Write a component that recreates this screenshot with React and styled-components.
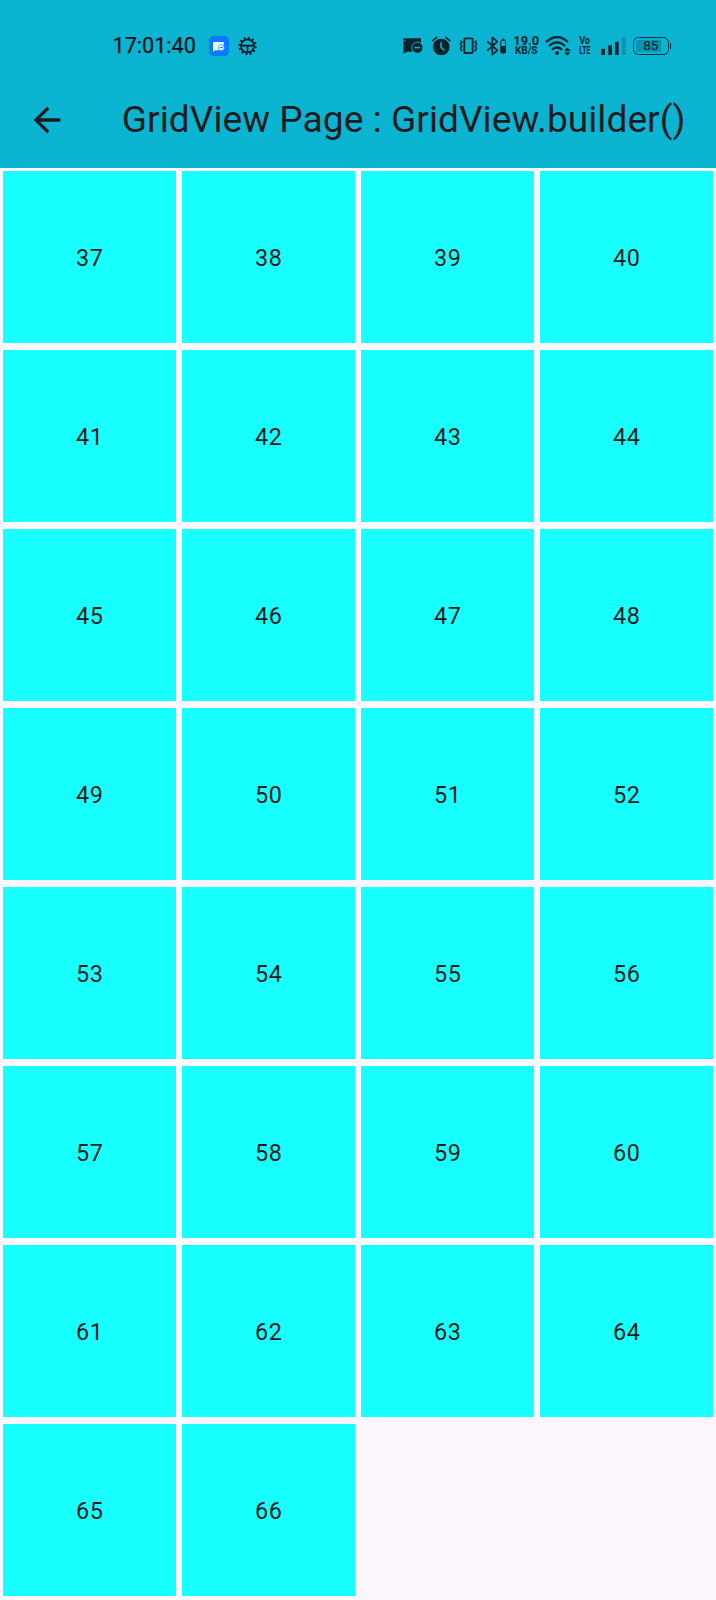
import React from "react";
import styled, { createGlobalStyle } from "styled-components";

const GlobalStyle = createGlobalStyle`
  * { box-sizing: border-box; }
  body { margin: 0; background: #fef7ff; }
`;

const Screen = styled.div`
  width: 716px;
  height: 1600px;
  overflow: hidden;
  background: #fef7ff;
  color: #1d1b20;
  font-family: Roboto, sans-serif;
`;

const Header = styled.header`
  height: 167.6px;
  background: #0bb4d1;
`;

const StatusBar = styled.div`
  display: flex;
  align-items: center;
  justify-content: space-between;
  height: 74px;
  padding: 17px 45px 0 112.5px;
  color: #06222b;
`;

const StatusGroup = styled.div`
  display: flex;
  align-items: center;
`;

const Clock = styled.span`
  width: 96px;
  padding-top: 1px;
  font-size: 21.6px;
  line-height: 24px;
  font-weight: 400;
  -webkit-text-stroke: 0.25px #041217;
  color: #041217;
  white-space: nowrap;
`;

const Glyph = styled.svg`
  display: block;
  flex: none;
  width: ${(p) => p.$w}px;
  height: ${(p) => p.$h || 20}px;
  margin-right: ${(p) => p.$gap || 0}px;
`;

const Stack = styled.div`
  display: flex;
  flex-direction: column;
  align-items: center;
  flex: none;
  width: ${(p) => p.$w}px;
  margin-right: ${(p) => p.$gap}px;
  white-space: nowrap;
`;

const StackLine = styled.span`
  font-size: ${(p) => p.$size}px;
  line-height: ${(p) => p.$line}px;
  font-weight: ${(p) => p.$weight || 700};
  transform: scaleX(${(p) => p.$stretch || 1});
`;

const Battery = styled.div`
  display: flex;
  align-items: center;
  width: 38px;
`;

const BatteryCase = styled.div`
  width: 35.5px;
  height: 18px;
  padding: 2px;
  border: 1.5px solid #08303b;
  border-radius: 5.5px;
`;

const BatteryLevel = styled.div`
  display: flex;
  align-items: center;
  justify-content: center;
  height: 100%;
  border-radius: 3px;
  font-size: 13.5px;
  line-height: 11px;
  font-weight: 400;
  background: linear-gradient(90deg, #0893af 84%, transparent 84%);
`;

const BatteryTip = styled.div`
  width: 1.5px;
  height: 6px;
  margin-left: 1px;
  border-radius: 1px;
  background: #08303b;
`;

const AppBar = styled.div`
  display: flex;
  align-items: center;
  height: 92px;
  padding-left: 27.3px;
`;

const BackButton = styled.button`
  display: flex;
  width: 40px;
  height: 40px;
  margin: 0 54.5px 0 0;
  padding: 0;
  border: 0;
  background: none;
  color: inherit;
`;

const Title = styled.h1`
  margin: 0;
  font-size: 37px;
  line-height: 46px;
  font-weight: 400;
  letter-spacing: 0.09px;
  white-space: nowrap;
`;

const Grid = styled.main`
  display: grid;
  grid-template-columns: repeat(4, 1fr);
  grid-auto-rows: 179px;
`;

const Cell = styled.div`
  display: flex;
  align-items: center;
  justify-content: center;
  margin: 3.3px;
  padding: 2.4px 0 0 0.4px;
  background: #18ffff;
  font-size: 23.4px;
  line-height: 33px;
  letter-spacing: 0.5px;
`;

const DARK = "#06222b";
const TEAL = "#0bb4d1";

const BadgeIcon = () => (
  <Glyph $w={20} $gap={9.5} viewBox="0 0 60 60">
    <rect width="60" height="60" rx="13" fill="#087bff" />
    <path d="M12 18h32v10a12 12 0 0 0-14 15H18l-6 5z" fill="#fff" />
    <circle cx="37" cy="35" r="9" fill="#fff" stroke="#087bff" strokeWidth="2" />
    <path d="M32 35h10" stroke="#087bff" strokeWidth="3" />
  </Glyph>
);

const GearIcon = () => (
  <Glyph $w={19} viewBox="-29 -29 58 58">
    <g fill="none" stroke="#041217">
      <circle r="20" strokeWidth="5" />
      <circle r="25" strokeWidth="5.5" strokeDasharray="6.5 6.590" />
      <path d="M-19-1H19M0 0V19" strokeWidth="5" />
    </g>
  </Glyph>
);

const MessageIcon = () => (
  <Glyph $w={20} $gap={8} viewBox="23 32 60 60">
    <path d="M24 39h53v14q-18-5-26 12v14H36l-12 6z" fill={DARK} />
    <path d="M25 44l7 4" stroke={TEAL} strokeWidth="2" />
    <circle cx="66" cy="67" r="17" fill={DARK} stroke={TEAL} strokeWidth="3" />
    <path d="M57 67h18" stroke={TEAL} strokeWidth="4.5" />
  </Glyph>
);

const AlarmIcon = () => (
  <Glyph $w={20} $gap={8.5} viewBox="108 31 60 60">
    <circle cx="138.500" cy="64" r="25" fill={DARK} />
    <path d="M113 45l12-10M164 45l-12-10" stroke={DARK} strokeWidth="5" strokeLinecap="round" />
    <path d="M138 51v14l9 8" fill="none" stroke={TEAL} strokeWidth="4.500" strokeLinecap="round" />
  </Glyph>
);

const VibrateIcon = () => (
  <Glyph $w={19} $gap={8} viewBox="192 31 57 60">
    <g fill="none" stroke={DARK} strokeWidth="5.500" strokeLinejoin="round">
      <rect x="208" y="38" width="25" height="44" rx="3" />
      <path d="M196 45l5 5-5 6 5 6-5 6 5 6-3 3M245 45l-5 5 5 6-5 6 5 6-5 6 3 3" strokeWidth="4.500" />
    </g>
  </Glyph>
);

const BluetoothIcon = () => (
  <Glyph $w={21} $gap={6.5} viewBox="272 30 63 60">
    <path d="M276 46l30 27-15 13V34l15 13-30 27" fill="none" stroke={DARK} strokeWidth="5" strokeLinejoin="round" />
    <rect x="316.500" y="43" width="14" height="38" rx="3" fill="none" stroke={DARK} strokeWidth="3" />
    <path d="M320 38h7v4h-7zM316 60h15v21h-15z" fill={DARK} />
  </Glyph>
);

const WifiIcon = () => (
  <Glyph $w={26} $gap={7.5} viewBox="28 28 78 60">
    <g fill="none" stroke={DARK} strokeWidth="6.500">
      <path d="M31 46Q64 16 97 46" />
      <path d="M40 58Q64 36 88 58" />
      <path d="M49 69Q64 56 79 69" />
    </g>
    <circle cx="64" cy="79" r="6" fill={DARK} />
    <path d="M95 62l9 11H86zM86 77h18l-9 10z" fill={DARK} />
  </Glyph>
);

const SignalIcon = () => (
  <Glyph $w={25} $gap={7.3} viewBox="196 28 75 60">
    <path d="M197 66h11v19h-11zM218 56h11v29h-11zM238 45h11v40h-11z" fill={DARK} />
    <path d="M259 32h11v53h-11z" fill="#0893af" />
  </Glyph>
);

const firstItem = 37;
const items = Array.from({ length: 30 }, (_, i) => firstItem + i);

export default function App() {
  return (
    <Screen>
      <GlobalStyle />
      <Header>
        <StatusBar>
          <StatusGroup>
            <Clock>17:01:40</Clock>
            <BadgeIcon />
            <GearIcon />
          </StatusGroup>
          <StatusGroup>
            <MessageIcon />
            <AlarmIcon />
            <VibrateIcon />
            <BluetoothIcon />
            <Stack $w={25} $gap={6}>
              <StackLine $size={12.8} $line={11.5}>19.0</StackLine>
              <StackLine $size={10} $line={10.5}>KB/S</StackLine>
            </Stack>
            <WifiIcon />
            <Stack $w={13} $gap={9.5}>
              <StackLine $size={11} $line={10} $stretch={0.82}>Vo</StackLine>
              <StackLine $size={11} $line={10} $stretch={0.63}>LTE</StackLine>
            </Stack>
            <SignalIcon />
            <Battery>
              <BatteryCase>
                <BatteryLevel>85</BatteryLevel>
              </BatteryCase>
              <BatteryTip />
            </Battery>
          </StatusGroup>
        </StatusBar>
        <AppBar>
          <BackButton aria-label="Back">
            <Glyph $w={40} $h={40} viewBox="0 0 24 24">
              <path d="M20 11H7.830l5.590-5.590L12 4l-8 8 8 8 1.410-1.410L7.830 13H20v-2z" fill="currentColor" />
            </Glyph>
          </BackButton>
          <Title>GridView Page : GridView.builder()</Title>
        </AppBar>
      </Header>
      <Grid>
        {items.map((n) => (
          <Cell key={n}>{n}</Cell>
        ))}
      </Grid>
    </Screen>
  );
}
